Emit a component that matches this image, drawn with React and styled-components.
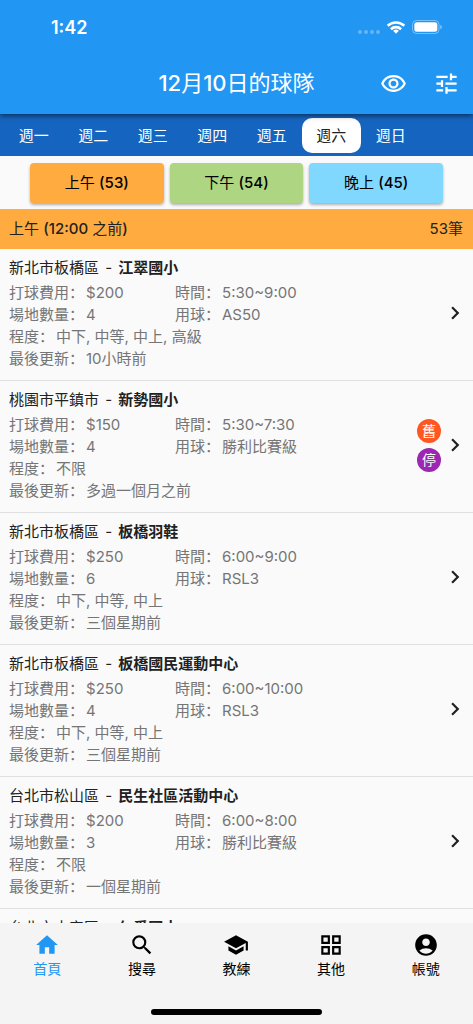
import React, { useState } from "react";
import styled, { createGlobalStyle } from "styled-components";
import {
  MdAccountCircle,
  MdChevronRight,
  MdGridView,
  MdHome,
  MdOutlineRemoveRedEye,
  MdSchool,
  MdSearch,
  MdTune,
} from "react-icons/md";

const days = ["週一", "週二", "週三", "週四", "週五", "週六", "週日"];

const periods = [
  { label: "上午", count: 53, color: "#ffab40" },
  { label: "下午", count: 54, color: "#aed581" },
  { label: "晚上", count: 45, color: "#80d8ff" },
];

const teams = [
  {
    area: "新北市板橋區",
    place: "江翠國小",
    fee: "$200",
    time: "5:30~9:00",
    courts: "4",
    ball: "AS50",
    level: "中下, 中等, 中上, 高級",
    updated: "10小時前",
  },
  {
    area: "桃園市平鎮市",
    place: "新勢國小",
    fee: "$150",
    time: "5:30~7:30",
    courts: "4",
    ball: "勝利比賽級",
    level: "不限",
    updated: "多過一個月之前",
    badges: [
      { text: "舊", color: "#ff5722" },
      { text: "停", color: "#9c27b0" },
    ],
  },
  {
    area: "新北市板橋區",
    place: "板橋羽鞋",
    fee: "$250",
    time: "6:00~9:00",
    courts: "6",
    ball: "RSL3",
    level: "中下, 中等, 中上",
    updated: "三個星期前",
  },
  {
    area: "新北市板橋區",
    place: "板橋國民運動中心",
    fee: "$250",
    time: "6:00~10:00",
    courts: "4",
    ball: "RSL3",
    level: "中下, 中等, 中上",
    updated: "三個星期前",
  },
  {
    area: "台北市松山區",
    place: "民生社區活動中心",
    fee: "$200",
    time: "6:00~8:00",
    courts: "3",
    ball: "勝利比賽級",
    level: "不限",
    updated: "一個星期前",
  },
  {
    area: "台北市大安區",
    place: "仁愛國中",
    fee: "$200",
    time: "6:00~8:00",
    courts: "4",
    ball: "RSL3",
    level: "中等, 中上",
    updated: "一個星期前",
  },
];

const navItems = [
  { label: "首頁", icon: MdHome },
  { label: "搜尋", icon: MdSearch },
  { label: "教練", icon: MdSchool },
  { label: "其他", icon: MdGridView },
  { label: "帳號", icon: MdAccountCircle },
];

const GlobalStyle = createGlobalStyle`
  * {
    box-sizing: border-box;
  }

  body {
    margin: 0;
    background: #fafafa;
    font-family: Inter, "Noto Sans CJK SC", sans-serif;
    font-size: 15px;
    color: #212121;
  }

  button {
    margin: 0;
    padding: 0;
    border: 0;
    background: none;
    color: inherit;
    font: inherit;
    cursor: pointer;
  }
`;

const Page = styled.div`
  display: flex;
  flex-direction: column;
  height: 100vh;
  overflow: hidden;
`;

const Medium = styled.span`
  font-weight: 500;
`;

const Header = styled.header`
  z-index: 1;
  flex: none;
  background: #2196f3;
  color: #fff;
  box-shadow: 0 2px 5px rgba(0, 0, 0, 0.5);
`;

const StatusBar = styled.div`
  display: flex;
  align-items: center;
  justify-content: space-between;
  height: 52px;
  padding: 2px 31px 0 51px;
  font-size: 18px;
  font-weight: 600;
`;

const AppBar = styled.div`
  display: grid;
  grid-template-columns: 1fr auto 1fr;
  align-items: center;
  height: 62px;
  padding: 0 13px;
`;

const Title = styled.h1`
  grid-column: 2;
  margin: 0;
  font-size: 22px;
  font-weight: 400;
  line-height: 32px;
`;

const Actions = styled.div`
  display: flex;
  justify-content: flex-end;
  gap: 26px;
`;

const IconButton = styled.button`
  display: flex;
  font-size: 27px;
`;

const DayTabs = styled.nav`
  display: flex;
  flex: none;
  padding: 4px 4px 3px;
  background: #1565c0;
`;

const DayTab = styled.button`
  flex: 0 0 12.8%;
  height: 35px;
  padding-bottom: 3px;
  border-radius: 10px;
  background: ${(props) => (props.$active ? "#fff" : "transparent")};
  color: ${(props) => (props.$active ? "#212121" : "#fff")};
`;

const Periods = styled.div`
  display: flex;
  flex: none;
  gap: 6px;
  padding: 7px 30px 6px;
`;

const PeriodButton = styled.button`
  flex: 1;
  height: 40px;
  padding-bottom: 3px;
  border-radius: 4px;
  background: ${(props) => props.$color};
  box-shadow: 0 2px 3px rgba(0, 0, 0, 0.3);
  color: #000;
`;

const SectionBar = styled.div`
  display: flex;
  flex: none;
  align-items: center;
  justify-content: space-between;
  height: 40px;
  padding: 0 10px 3px 9px;
  background: #ffab40;
`;

const SectionTitle = styled.h2`
  margin: 0;
  font-size: 15px;
  font-weight: 400;
`;

const List = styled.ul`
  flex: 1;
  min-height: 0;
  margin: 0;
  padding: 0;
  overflow: hidden;
  list-style: none;
`;

const Row = styled.a`
  display: flex;
  align-items: center;
  padding: 7px 5px 10px 9px;
  border-bottom: 1px solid #e0e0e0;
  color: #212121;
  text-decoration: none;
`;

const RowBody = styled.div`
  flex: 1;
`;

const RowTitle = styled.div`
  margin-bottom: 2px;
  line-height: 24px;
`;

const Dash = styled.span`
  margin: 0 2px;
`;

const Details = styled.div`
  display: grid;
  grid-template-columns: 166px 1fr;
  color: #757575;
  line-height: 22px;
`;

const Field = styled.div`
  grid-column: ${(props) => (props.$wide ? "1 / -1" : "auto")};
  white-space: nowrap;
`;

const FieldLabel = styled.span`
  margin-right: 2px;
`;

const Badges = styled.div`
  display: flex;
  flex-direction: column;
  gap: 5px;
  margin-right: 1px;
`;

const Badge = styled.span`
  width: 24px;
  height: 24px;
  border-radius: 50%;
  background: ${(props) => props.$color};
  color: #fff;
  font-size: 14px;
  line-height: 24px;
  text-align: center;
`;

const BottomNav = styled.nav`
  display: flex;
  flex: none;
  background: #f4f4f4;
`;

const NavItem = styled.button`
  display: flex;
  flex: 1;
  flex-direction: column;
  align-items: center;
  padding-top: 9px;
  color: ${(props) => (props.$active ? "#2196f3" : "#000")};
  font-size: 14px;
  line-height: 22px;

  svg {
    font-size: 26px;
  }
`;

const HomeIndicator = styled.div`
  display: flex;
  flex: none;
  justify-content: center;
  padding: 29px 0 9px;
  background: #f4f4f4;

  &::after {
    content: "";
    width: 36%;
    height: 6px;
    border-radius: 3px;
    background: #000;
  }
`;

const StatusIcons = () => (
  <svg width="84" height="18" viewBox="0 0 84 18" fill="#fff">
    <g opacity="0.3">
      <circle cx="2" cy="14" r="2" />
      <circle cx="8" cy="14" r="2" />
      <circle cx="14" cy="14" r="2" />
      <circle cx="20" cy="14" r="2" />
    </g>
    <g fill="none" stroke="#fff" strokeWidth="2.6">
      <path d="M29.7 7.7a12.2 12.2 0 0 1 16.6 0" />
      <path d="M32.9 11.2a7.4 7.4 0 0 1 10.2 0" />
    </g>
    <path d="M38 15.8l-2.9-3a4.2 4.2 0 0 1 5.8 0z" />
    <rect
      x="54.5"
      y="2.5"
      width="26.5"
      height="13"
      rx="4"
      fill="none"
      stroke="#fff"
      strokeOpacity="0.4"
    />
    <rect x="56.3" y="4.2" width="23" height="9.6" rx="2.5" />
    <path d="M82.3 6.7c2 .8 2 3.8 0 4.6z" opacity="0.5" />
  </svg>
);

const TeamRow = ({ team }) => (
  <li>
    <Row href="#">
      <RowBody>
        <RowTitle>
          {team.area}
          <Dash> - </Dash>
          <b>{team.place}</b>
        </RowTitle>
        <Details>
          <Field>
            <FieldLabel>打球費用：</FieldLabel>
            {team.fee}
          </Field>
          <Field>
            <FieldLabel>時間：</FieldLabel>
            {team.time}
          </Field>
          <Field>
            <FieldLabel>場地數量：</FieldLabel>
            {team.courts}
          </Field>
          <Field>
            <FieldLabel>用球：</FieldLabel>
            {team.ball}
          </Field>
          <Field $wide>
            <FieldLabel>程度：</FieldLabel>
            {team.level}
          </Field>
          <Field $wide>
            <FieldLabel>最後更新：</FieldLabel>
            {team.updated}
          </Field>
        </Details>
      </RowBody>
      {team.badges && (
        <Badges>
          {team.badges.map((badge) => (
            <Badge key={badge.text} $color={badge.color}>
              {badge.text}
            </Badge>
          ))}
        </Badges>
      )}
      <MdChevronRight size={26} />
    </Row>
  </li>
);

const App = () => {
  const [day, setDay] = useState("週六");
  const [page, setPage] = useState("首頁");

  return (
    <Page lang="zh-Hans">
      <GlobalStyle />
      <Header>
        <StatusBar>
          <span>1:42</span>
          <StatusIcons />
        </StatusBar>
        <AppBar>
          <Title>
            <Medium>12</Medium>月<Medium>10</Medium>日的球隊
          </Title>
          <Actions>
            <IconButton aria-label="檢視">
              <MdOutlineRemoveRedEye />
            </IconButton>
            <IconButton aria-label="篩選">
              <MdTune />
            </IconButton>
          </Actions>
        </AppBar>
      </Header>
      <DayTabs>
        {days.map((name) => (
          <DayTab key={name} $active={name === day} onClick={() => setDay(name)}>
            {name}
          </DayTab>
        ))}
      </DayTabs>
      <Periods>
        {periods.map((period) => (
          <PeriodButton key={period.label} $color={period.color}>
            {period.label} <Medium>({period.count})</Medium>
          </PeriodButton>
        ))}
      </Periods>
      <SectionBar>
        <SectionTitle>
          上午 <Medium>(12:00 </Medium>之前<Medium>)</Medium>
        </SectionTitle>
        <span>53筆</span>
      </SectionBar>
      <List>
        {teams.map((team) => (
          <TeamRow key={team.area + team.place} team={team} />
        ))}
      </List>
      <BottomNav>
        {navItems.map(({ label, icon: Icon }) => (
          <NavItem
            key={label}
            $active={label === page}
            onClick={() => setPage(label)}
          >
            <Icon />
            {label}
          </NavItem>
        ))}
      </BottomNav>
      <HomeIndicator />
    </Page>
  );
};

export default App;
